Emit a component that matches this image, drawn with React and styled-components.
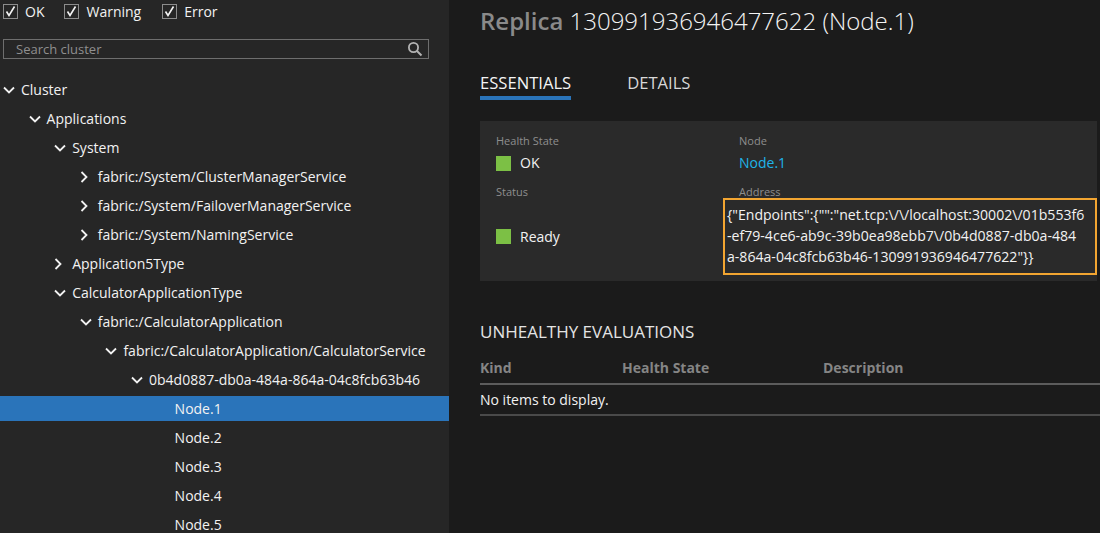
import React from "react";
import styled, { createGlobalStyle } from "styled-components";

const Global = createGlobalStyle`
  html, body { margin: 0; padding: 0; background: #1b1b1b; }
  body { font-family: "Open Sans", "Noto Sans", sans-serif; }
`;

const Shell = styled.div`
  display: flex;
  width: 1100px;
  height: 533px;
  overflow: hidden;
  background: #1b1b1b;
  color: #f2f2f2;
`;

const Sidebar = styled.aside`
  width: 449px;
  flex: none;
  background: #262626;
  display: flex;
  flex-direction: column;
  padding: 3px 0 0 0;
  box-sizing: border-box;
`;

const FilterBar = styled.div`
  display: flex;
  align-items: center;
  height: 17px;
  padding-left: 3px;
`;

const CheckLabel = styled.label`
  display: flex;
  align-items: center;
  gap: 7px;
  font-size: 14px;
  color: #f2f2f2;
  margin-right: ${(p) => p.$gap}px;
`;

const Box = styled.span`
  width: 15px;
  height: 15px;
  box-sizing: border-box;
  border: 1px solid #8c8c8c;
  display: flex;
  align-items: center;
  justify-content: center;
`;

const Search = styled.div`
  margin: 19px 0 0 3px;
  width: 426px;
  height: 25px;
  box-sizing: border-box;
  border: 1px solid #6e6e6e;
  display: flex;
  align-items: center;
  justify-content: space-between;
  padding: 0 5px 0 12px;
`;

const Placeholder = styled.span`
  font-size: 13px;
  color: #8f8f8f;
`;

const Tree = styled.div`
  display: flex;
  flex-direction: column;
  gap: 4px;
  margin-top: 18px;
`;

const Row = styled.div`
  height: 25px;
  display: flex;
  align-items: center;
  padding-left: ${(p) => 3 + p.$level * 25.6}px;
  background: ${(p) => (p.$selected ? "#2a74ba" : "transparent")};
  font-size: 14px;
  color: #f2f2f2;
  white-space: nowrap;
`;

const Twist = styled.span`
  width: 18px;
  flex: none;
  display: flex;
  align-items: center;
`;

const Main = styled.main`
  flex: 1;
  padding: 3px 0 0 31px;
  display: flex;
  flex-direction: column;
  min-width: 0;
`;

const Title = styled.h1`
  margin: 0;
  font-size: 24px;
  font-weight: 300;
  line-height: 36px;
  color: #f4f4f4;
  white-space: nowrap;
`;

const TitleKind = styled.span`
  font-weight: 600;
  color: #8a8a8a;
`;

const Tabs = styled.div`
  display: flex;
  gap: 56px;
  margin-top: 34px;
`;

const Tab = styled.div`
  font-size: 16.6px;
  color: ${(p) => (p.$active ? "#f4f4f4" : "#d8d8d8")};
  padding-bottom: 3px;
  border-bottom: 4px solid ${(p) => (p.$active ? "#2a74ba" : "transparent")};
  line-height: 20px;
`;

const Essentials = styled.section`
  margin-top: 21px;
  background: #2a2a2a;
  height: 160px;
  box-sizing: border-box;
  padding: 13px 0 0 16px;
  display: grid;
  grid-template-columns: 243px 1fr;
  grid-template-rows: auto auto;
  row-gap: 3px;
  margin-right: 3px;
`;

const Field = styled.div`
  display: flex;
  flex-direction: column;
`;

const Label = styled.div`
  font-size: 11px;
  color: #8e8e8e;
  line-height: 14px;
`;

const Value = styled.div`
  display: flex;
  align-items: center;
  gap: 9px;
  font-size: 14px;
  line-height: 24px;
  margin-top: ${(p) => (p.$fill ? 0 : 3)}px;
  padding-bottom: ${(p) => (p.$fill ? 6 : 0)}px;
  color: ${(p) => (p.$link ? "#1fb4e8" : "#f2f2f2")};
  flex: ${(p) => (p.$fill ? 1 : "none")};
`;

const Swatch = styled.span`
  width: 15px;
  height: 15px;
  background: #7cc045;
  flex: none;
`;

const AddressBox = styled.div`
  margin: -1px 0 0 -16px;
  width: 374px;
  box-sizing: border-box;
  border: 2px solid #f2a531;
  padding: 4px 2px 6px 2px;
  font-size: 14.1px;
  line-height: 21px;
  color: #f2f2f2;
  white-space: nowrap;
  overflow: hidden;
`;

const AddrLine = styled.div``;

const SectionHead = styled.h2`
  margin: 40px 0 0 0;
  font-size: 17px;
  font-weight: 400;
  color: #e4e4e4;
  line-height: 22px;
`;

const Table = styled.div`
  margin-top: 15px;
  display: flex;
  flex-direction: column;
`;

const HeadRow = styled.div`
  display: grid;
  grid-template-columns: 142px 201px 1fr;
  font-size: 14px;
  font-weight: 700;
  color: #858585;
  line-height: 20px;
  padding-bottom: 5px;
  border-bottom: 2px solid #5c5c5c;
`;

const EmptyRow = styled.div`
  font-size: 14px;
  color: #f2f2f2;
  line-height: 20px;
  padding: 5px 0 4px 0;
  border-bottom: 2px solid #4a4a4a;
`;

const Chevron = ({ open }) =>
  open ? (
    <svg width="12" height="8" viewBox="0 0 12 8">
      <polyline points="1,1.5 6,6.5 11,1.5" fill="none" stroke="#f2f2f2" strokeWidth="1.8" />
    </svg>
  ) : (
    <svg width="8" height="12" viewBox="0 0 8 12">
      <polyline points="1.5,1 6.5,6 1.5,11" fill="none" stroke="#f2f2f2" strokeWidth="1.8" />
    </svg>
  );

const Check = () => (
  <svg width="11" height="11" viewBox="0 0 11 11">
    <polyline points="1.5,5.5 4,9.5 9.5,0.5" fill="none" stroke="#f4f4f4" strokeWidth="1.6" />
  </svg>
);

const SearchIcon = () => (
  <svg width="16" height="16" viewBox="0 0 16 16">
    <circle cx="6.5" cy="6.5" r="4.6" fill="none" stroke="#b4b4b4" strokeWidth="1.8" />
    <line x1="10" y1="10" x2="14.5" y2="14.5" stroke="#b4b4b4" strokeWidth="2" />
  </svg>
);

const nodes = [
  { label: "Cluster", level: 0, open: true },
  { label: "Applications", level: 1, open: true },
  { label: "System", level: 2, open: true },
  { label: "fabric:/System/ClusterManagerService", level: 3, open: false },
  { label: "fabric:/System/FailoverManagerService", level: 3, open: false },
  { label: "fabric:/System/NamingService", level: 3, open: false },
  { label: "Application5Type", level: 2, open: false },
  { label: "CalculatorApplicationType", level: 2, open: true },
  { label: "fabric:/CalculatorApplication", level: 3, open: true },
  { label: "fabric:/CalculatorApplication/CalculatorService", level: 4, open: true },
  { label: "0b4d0887-db0a-484a-864a-04c8fcb63b46", level: 5, open: true },
  { label: "Node.1", level: 6, selected: true },
  { label: "Node.2", level: 6 },
  { label: "Node.3", level: 6 },
  { label: "Node.4", level: 6 },
  { label: "Node.5", level: 6 },
];

const filters = [
  { label: "OK", gap: 20 },
  { label: "Warning", gap: 21 },
  { label: "Error", gap: 0 },
];

export default function App() {
  return (
    <>
      <Global />
      <Shell>
        <Sidebar>
          <FilterBar>
            {filters.map((f) => (
              <CheckLabel key={f.label} $gap={f.gap}>
                <Box>
                  <Check />
                </Box>
                {f.label}
              </CheckLabel>
            ))}
          </FilterBar>
          <Search>
            <Placeholder>Search cluster</Placeholder>
            <SearchIcon />
          </Search>
          <Tree>
            {nodes.map((n) => (
              <Row key={n.label} $level={n.level} $selected={n.selected}>
                <Twist>{n.open !== undefined && <Chevron open={n.open} />}</Twist>
                {n.label}
              </Row>
            ))}
          </Tree>
        </Sidebar>
        <Main>
          <Title>
            <TitleKind>Replica</TitleKind> 130991936946477622 (Node.1)
          </Title>
          <Tabs>
            <Tab $active>ESSENTIALS</Tab>
            <Tab>DETAILS</Tab>
          </Tabs>
          <Essentials>
            <Field>
              <Label>Health State</Label>
              <Value>
                <Swatch />
                OK
              </Value>
            </Field>
            <Field>
              <Label>Node</Label>
              <Value $link>Node.1</Value>
            </Field>
            <Field>
              <Label>Status</Label>
              <Value $fill>
                <Swatch />
                Ready
              </Value>
            </Field>
            <Field>
              <Label>Address</Label>
              <AddressBox>
                <AddrLine>{'{"Endpoints":{"":"net.tcp:\\/\\/localhost:30002\\/01b553f6'}</AddrLine>
                <AddrLine>{"-ef79-4ce6-ab9c-39b0ea98ebb7\\/0b4d0887-db0a-484"}</AddrLine>
                <AddrLine>{'a-864a-04c8fcb63b46-130991936946477622"}}'}</AddrLine>
              </AddressBox>
            </Field>
          </Essentials>
          <SectionHead>UNHEALTHY EVALUATIONS</SectionHead>
          <Table>
            <HeadRow>
              <span>Kind</span>
              <span>Health State</span>
              <span>Description</span>
            </HeadRow>
            <EmptyRow>No items to display.</EmptyRow>
          </Table>
        </Main>
      </Shell>
    </>
  );
}
